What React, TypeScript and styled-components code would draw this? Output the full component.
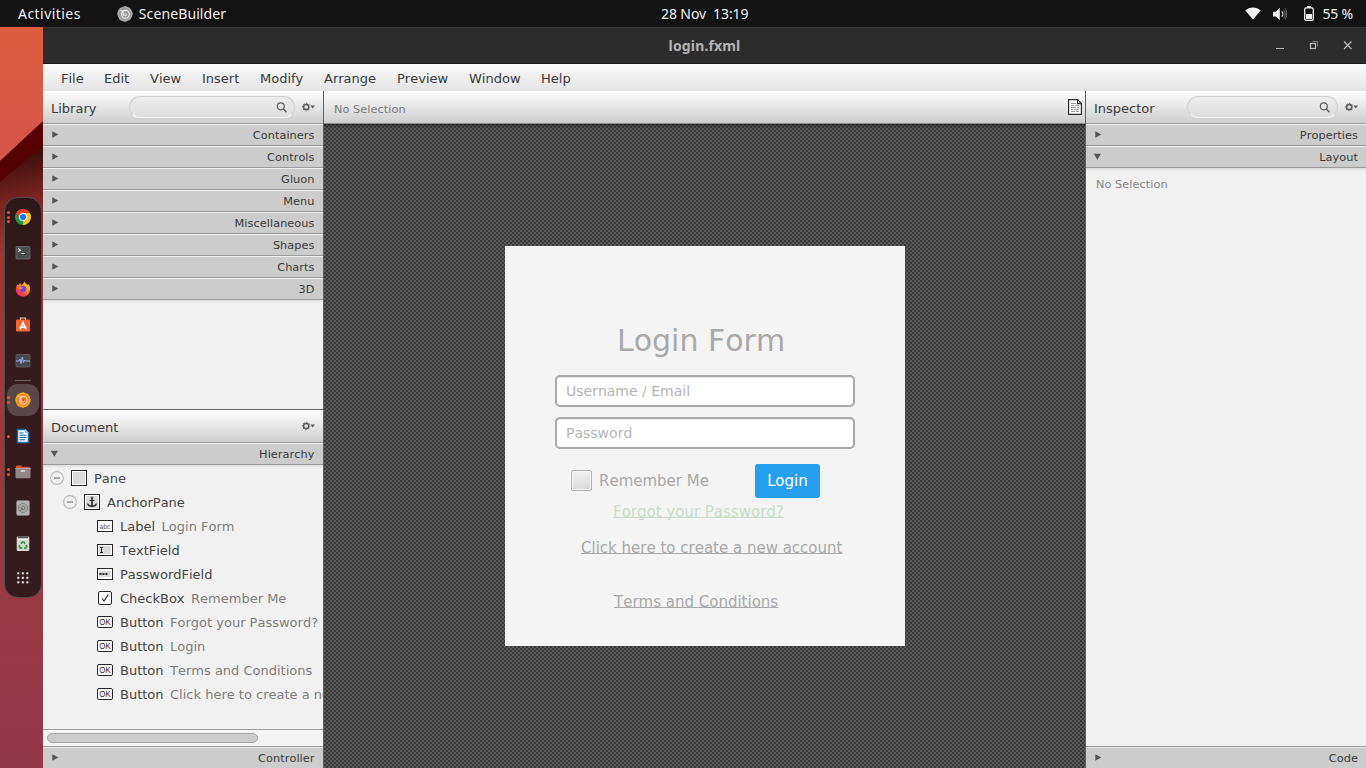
import React from 'react';
import styled, { createGlobalStyle } from 'styled-components';

const GlobalStyle = createGlobalStyle`
  * { box-sizing: border-box; }
  body {
    margin: 0;
    width: 1366px;
    height: 768px;
    overflow: hidden;
    font-family: 'DejaVu Sans', sans-serif;
    font-size: 13px;
    font-kerning: none;
    color: #3a3a3a;
  }
  svg { display: block; flex: none; }
`;

const Desktop = styled.div`
  display: flex;
  flex-direction: column;
  width: 1366px;
  height: 768px;
  overflow: hidden;
`;

const TopBar = styled.header`
  display: flex;
  align-items: center;
  height: 27px;
  flex: none;
  padding: 0 13px 0 18px;
  background: #131313;
  color: #f2f2f2;
  font: 14px/26px 'Noto Sans', sans-serif;
  white-space: pre;
`;

const TopGroup = styled.div<{ $end?: boolean }>`
  display: flex;
  align-items: center;
  height: 26px;
  flex: ${(p) => (p.$end ? '1' : '0 0 643px')};
  justify-content: ${(p) => (p.$end ? 'flex-end' : 'flex-start')};
`;

const BarText = styled.span<{ $ls?: number; $ml?: number }>`
  letter-spacing: ${(p) => p.$ls ?? 0}px;
  margin-left: ${(p) => p.$ml ?? 0}px;
`;

const IconSlot = styled.span<{ $ml: number }>`
  margin-left: ${(p) => p.$ml}px;
`;

const Body = styled.div`
  display: flex;
  flex: 1;
  min-height: 0;
`;

const DockArea = styled.aside`
  position: relative;
  width: 43px;
  flex: none;
  padding: 170px 1px 0 4px;
`;

const Wallpaper = styled.svg`
  position: absolute;
  inset: 0;
`;

const Dock = styled.nav`
  position: relative;
  display: flex;
  flex-direction: column;
  width: 38px;
  height: 401px;
  padding-top: 1px;
  border: 1px solid #56484a;
  border-radius: 14px;
  background: linear-gradient(#2d1819, #371b1e 30%, #351a1e);
`;

const DockItem = styled.div<{ $active?: boolean; $h?: number }>`
  position: relative;
  display: flex;
  align-items: center;
  justify-content: center;
  width: 32px;
  margin: ${(p) => (p.$active ? '2px' : '0')} 2px;
  height: ${(p) => (p.$active ? 32 : p.$h ?? 36)}px;
  border-radius: 11px;
  background: ${(p) => (p.$active ? '#5b4649' : 'transparent')};
`;

const Dots = styled.span`
  position: absolute;
  left: 0;
  top: 0;
  bottom: 0;
  display: flex;
  flex-direction: column;
  justify-content: center;
  gap: 1.500px;
  i {
    width: 3px;
    height: 3px;
    border-radius: 50%;
    background: #e8562a;
  }
`;

const DockSeparator = styled.div`
  width: 16px;
  height: 1px;
  margin: 1px 10px;
  flex: none;
  background: #6f5f60;
`;

const Window = styled.main`
  display: flex;
  flex-direction: column;
  flex: 1;
  min-width: 0;
`;

const TitleBar = styled.div`
  display: grid;
  grid-template-columns: 1fr auto 1fr;
  align-items: center;
  height: 37px;
  flex: none;
  background: #2c2c2c;
  border-top: 1px solid #3a3a3a;
  border-bottom: 1px solid #191919;
  color: #b4b4b4;
  font: bold 14px/34px 'Noto Sans', sans-serif;
`;

const TitleText = styled.span`
  letter-spacing: 0.15px;
`;

const WindowButtons = styled.div`
  display: flex;
  justify-content: flex-end;
  padding-right: 13px;
`;

const MenuBar = styled.div`
  display: flex;
  align-items: center;
  gap: 21px;
  height: 27px;
  flex: none;
  padding: 2px 18px 0;
  background: linear-gradient(#f9f9f9, #e4e4e4);
`;

const MenuItem = styled.span<{ $w: number }>`
  width: ${(p) => p.$w}px;
  white-space: nowrap;
`;

const Workspace = styled.div`
  display: flex;
  flex: 1;
  min-height: 0;
`;

const SidePanel = styled.section`
  display: flex;
  flex-direction: column;
  width: 280px;
  flex: none;
  background: #f1f1f1;
  overflow: hidden;
`;

const Divider = styled.div`
  width: 1px;
  flex: none;
  background: #606060;
`;

const ToolHeader = styled.div<{ $doc?: boolean }>`
  display: flex;
  align-items: center;
  height: ${(p) => (p.$doc ? 34 : 33)}px;
  flex: none;
  padding: 0 8px;
  border-top: ${(p) => (p.$doc ? '1px solid #666' : 'none')};
  border-bottom: 1px solid #9b9b9b;
  background: linear-gradient(#fefefe, #cecece);
`;

const PanelTitle = styled.span`
  flex: 1;
  padding-top: 2px;
`;

const SearchBox = styled.div<{ $w: number }>`
  display: flex;
  align-items: center;
  justify-content: flex-end;
  width: ${(p) => p.$w}px;
  height: 22px;
  margin-right: 7px;
  padding-right: 7px;
  border: 1px solid #d0d0d0;
  border-bottom-color: #f4f4f4;
  border-radius: 11px;
  background: linear-gradient(#ededed, #dddddd);
`;

const SectionBar = styled.div<{ $inset?: number }>`
  display: flex;
  align-items: center;
  justify-content: space-between;
  height: 22px;
  flex: none;
  padding: 0 ${(p) => p.$inset ?? 8}px 0 9px;
  border-top: 1px solid #f0f0f0;
  border-bottom: 1px solid #9a9a9a;
  background: #cccccc;
  font-size: 11.3px;
  line-height: 19px;
`;

const SectionTitle = styled.span`
  padding-top: 1px;
  letter-spacing: 0.06px;
`;

const SectionEnd = styled.div`
  height: 3px;
  flex: none;
  background: linear-gradient(#dcdcdc, #f1f1f1);
`;

const Fill = styled.div`
  flex: 1;
  min-height: 0;
`;

const Tree = styled.div`
  flex: none;
  height: 263px;
  overflow: hidden;
  margin-top: -2px;
  color: #444;
`;

const TreeRow = styled.div<{ $indent: number }>`
  display: flex;
  align-items: center;
  height: 24px;
  padding-left: ${(p) => p.$indent}px;
  white-space: pre;
`;

const RowIcon = styled.span<{ $gap: number }>`
  display: flex;
  justify-content: center;
  width: 16px;
  flex: none;
  margin-right: ${(p) => p.$gap}px;
`;

const Toggle = styled.span`
  flex: none;
  margin-right: 7px;
`;

const Detail = styled.span`
  margin-left: 6.5px;
  color: #7d7d7d;
`;

const ScrollBar = styled.div`
  height: 17px;
  flex: none;
  padding: 3px 4px;
  border-top: 1px solid #9e9e9e;
  background: #f3f3f3;
`;

const ScrollThumb = styled.div`
  width: 211px;
  height: 10px;
  border: 1px solid #a4a4a4;
  border-radius: 5px;
  background: #cccccc;
`;

const BottomSection = styled(SectionBar)`
  height: 22px;
  border-top: 1px solid #9a9a9a;
  border-bottom: none;
  box-shadow: inset 0 1px #ececec;
`;

const Center = styled.section`
  display: flex;
  flex-direction: column;
  flex: 1;
  min-width: 0;
`;

const StatusHeader = styled(ToolHeader)`
  justify-content: space-between;
  padding: 0 3px 0 10px;
  border-bottom-color: #8a8a8a;
  font-size: 11.3px;
  color: #7b7b7b;
`;

const StatusText = styled.span`
  padding-top: 4px;
  letter-spacing: 0.05px;
`;

const Stage = styled.div`
  flex: 1;
  padding: 122px 0 0 181px;
  background-color: #383838;
  background-image:
    linear-gradient(rgba(0, 0, 0, 0.4), transparent 4px),
    conic-gradient(#5a5a5a 25%, #3a3a3a 0 50%, #5a5a5a 0 75%, #3a3a3a 0);
  background-size: 100% 100%, 4px 4px;
`;

const Form = styled.div`
  display: flex;
  flex-direction: column;
  width: 400px;
  height: 400px;
  padding: 77px 50px 0;
  background: #f4f4f4;
  color: #a9a9a9;
  font-size: 15px;
`;

const FormTitle = styled.h1`
  margin: 0 0 16px 62px;
  font-size: 30px;
  line-height: 36px;
  font-weight: normal;
  white-space: nowrap;
`;

const Field = styled.div`
  height: 32px;
  flex: none;
  margin-bottom: 10px;
  padding-left: 9px;
  border: 2px solid #a9a9a9;
  border-radius: 5px;
  background: #fff;
  box-shadow: inset 0 1px 1px #e8e8e8;
  color: #b4b4b4;
  font-size: 14px;
  line-height: 29px;
`;

const OptionRow = styled.div`
  display: flex;
  align-items: center;
  height: 34px;
  margin: 5px 0 0 16px;
`;

const CheckBox = styled.span`
  width: 21px;
  height: 21px;
  margin: -1px 7px 0 0;
  border: 1px solid #b3b3b3;
  border-radius: 2px;
  background: linear-gradient(#efefef, #dadada);
  box-shadow: inset 0 0 0 1px #f4f4f4;
`;

const OptionLabel = styled.span`
  width: 156px;
`;

const LoginButton = styled.button`
  width: 65px;
  height: 34px;
  padding: 0;
  border: 0;
  border-radius: 3px;
  background: #26a0ee;
  color: #fff;
  font: 15px 'DejaVu Sans', sans-serif;
`;

const FormLink = styled.a<{ $left: number; $top: number; $green?: boolean }>`
  margin: ${(p) => p.$top}px 0 0 ${(p) => p.$left}px;
  color: ${(p) => (p.$green ? '#cbdccb' : '#a9a9a9')};
  line-height: 18px;
  white-space: nowrap;
  text-decoration: underline;
  text-decoration-thickness: 1px;
  text-underline-offset: 0px;
  text-decoration-skip-ink: none;
`;

const EmptyNote = styled.div`
  padding: 6px 10px;
  font-size: 11.3px;
  letter-spacing: 0.05px;
  line-height: 16px;
  color: #858585;
`;

const SearchIcon = () => (
  <svg width="11" height="11" viewBox="0 0 11 11" fill="none" stroke="#5c5c5c">
    <circle cx="4.800" cy="4.300" r="3.500" strokeWidth="1.150" />
    <path d="M7.400 6.900 10.500 10.200" strokeWidth="1.400" />
  </svg>
);

const GearIcon = () => (
  <svg width="13" height="10" viewBox="0 0 13 10">
    <circle cx="4.2" cy="5" r="2.6" fill="none" stroke="#5a5a5a" strokeWidth="1.5" />
    <circle cx="4.2" cy="5" r="3.7" fill="none" stroke="#5a5a5a" strokeWidth="1" strokeDasharray="1.4 1.506" strokeDashoffset=".7" />
    <path d="M8.4 3.6h4.6L10.7 6.4z" fill="#5a5a5a" />
  </svg>
);

const Arrow = ({ open }: { open?: boolean }) => (
  <svg width="7" height="8" viewBox="0 0 7 8" style={{ overflow: 'visible' }}>
    <path d={open ? 'M-1.2 0.8h7.200L2.400 6.800z' : 'M0.3 0.2v6.600L6.300 3.500z'} fill="#555" />
  </svg>
);

const SceneLogo = ({ mono, size }: { mono?: boolean; size: number }) => (
  <svg width={size} height={size} viewBox="0 0 16 16">
    <path
      d="M8 .1 10.4.9 13 1.9 14.7 4.6 15.9 8 14.9 11.1 12.9 14 10.4 15.1 8 15.9 5.4 15.1 2.9 14 1.2 11.1.1 8 1.1 4.7 2.9 2 5.5.9z"
      fill={mono ? '#a9a9a9' : '#f7a813'}
    />
    <circle cx="8" cy="8" r="5.800" fill={mono ? '#979797' : '#f07a1c'} />
    <g fill="none" stroke={mono ? '#f2f2f2' : '#ffe6d2'} strokeWidth="1.1">
      <circle cx="8.500" cy="8.300" r="3.900" />
      <path d="M3.300 4.500 6.300 5.300M6 6.300 6.500 9l2 .9 1.500-1.500" />
    </g>
    <circle cx="8.300" cy="8" r="1.500" fill={mono ? '#b9b9b9' : '#e4502a'} />
  </svg>
);

const WifiIcon = () => (
  <svg width="16" height="13" viewBox="0 0 16 13">
    <path d="M.3 3.6C4.4-.5 11.6-.5 15.7 3.6L8 12.6z" fill="#f2f2f2" />
  </svg>
);

const VolumeIcon = () => (
  <svg width="16" height="14" viewBox="0 0 16 14">
    <path d="M0 4.700h2.800L6.800.8v12.400L2.800 9.400H0z" fill="#f2f2f2" />
    <path d="M8.800 4.400c1.400 1.400 1.400 3.800 0 5.200" fill="none" stroke="#eee" strokeWidth="1.2" />
    <path d="M10.300 2.600c2.400 2.500 2.400 6.300 0 8.800M12 1.200c2.200 3.400 2.200 8 0 11.400" fill="none" stroke="#777" />
  </svg>
);

const BatteryIcon = () => (
  <svg width="10" height="15" viewBox="0 0 10 15">
    <path d="M3 0h4v2H3z" fill="#f2f2f2" />
    <rect x=".7" y="1.9" width="8.6" height="12.4" rx="1.4" fill="none" stroke="#f2f2f2" strokeWidth="1.3" />
    <path d="M2 8h6v5H2z" fill="#f2f2f2" />
  </svg>
);

const WindowControls = () => (
  <svg width="80" height="12" viewBox="0 0 80 12" fill="none" stroke="#bdbdbd">
    <path d="M3 8.500h8" />
    <rect x="37.5" y="3.5" width="5" height="5" strokeWidth="1.2" />
    <path d="M39.5 1.5h5v5" stroke="#808080" />
    <path d="M71 1.500l7.500 7.500M78.500 1.500 71 9" strokeWidth="1.2" />
  </svg>
);

const PageIcon = () => (
  <svg width="14" height="16" viewBox="0 0 14 16">
    <path d="M.6.6h9L13.400 4.400V15.400H.6z" fill="#fff" stroke="#2b2b2b" strokeWidth="1.200" />
    <path d="M9.500.6v4h4" fill="none" stroke="#2b2b2b" strokeWidth="1.100" />
    <path d="M3 4.500h5M3 6.500h3M7 6.500h4M3 8.500h5M9 8.500h2M3 10.500h2M6 10.500h5M3 12.500h4M8 12.500h3" stroke="#9a9a9a" />
  </svg>
);

const CollapseIcon = () => (
  <svg width="14" height="14" viewBox="0 0 14 14" fill="none">
    <circle cx="7" cy="7" r="6.400" stroke="#b9b9b9" strokeWidth="1.100" />
    <path d="M4 7h6" stroke="#a8a8a8" strokeWidth="2" />
  </svg>
);

type Kind = 'pane' | 'anchor' | 'label' | 'text' | 'password' | 'check' | 'button';

const NodeIcon = ({ kind }: { kind: Kind }) => {
  if (kind === 'pane' || kind === 'anchor') {
    return (
      <svg width="16" height="16" viewBox="0 0 16 16">
        <rect x=".5" y=".5" width="15" height="15" fill="#fff" stroke="#262626" />
        <rect x="2" y="2" width="12" height="12" fill="#dadada" />
        {kind === 'anchor' && (
          <g fill="none" stroke="#262626">
            <path d="M8 4v8.500" strokeWidth="1.600" />
            <path d="M5.500 6.500h5" strokeWidth="1" />
            <path d="M3.500 9.500c.6 1.900 2.100 2.900 4.500 2.900s3.900-1 4.500-2.900" strokeWidth="1.200" />
            <circle cx="8" cy="3.700" r=".8" />
          </g>
        )}
      </svg>
    );
  }
  if (kind === 'check') {
    return (
      <svg width="14" height="14" viewBox="0 0 14 14">
        <rect x=".5" y=".5" width="13" height="13" rx="1.500" fill="#fff" stroke="#262626" />
        <path d="M4 7.500 6 10 10.300 3.500" fill="none" stroke="#262626" strokeWidth="1.100" />
      </svg>
    );
  }
  return (
    <svg width="16" height="12" viewBox="0 0 16 12">
      <rect x=".5" y=".5" width="15" height="11" rx={kind === 'button' ? 1.5 : 0} fill="#fff" stroke="#262626" />
      {(kind === 'text' || kind === 'password') && (
        <rect x="2" y={kind === 'text' ? 2 : 3} width="12" height={kind === 'text' ? 8 : 6} fill="#dadada" />
      )}
      {kind === 'text' && <path d="M3 3.500h3M3 8.500h3M4.500 3.500v5" stroke="#222" />}
      {kind === 'password' && <path d="M2.500 6h2M5.500 6h2M8.500 6h2" stroke="#222" strokeWidth="2" />}
      {kind === 'label' && (
        <text x="8" y="8.500" textAnchor="middle" fontSize="6.500" fontFamily="DejaVu Sans" textLength="11" fill="#555">abc</text>
      )}
      {kind === 'button' && (
        <text x="8" y="9" textAnchor="middle" fontSize="8.500" fontFamily="Liberation Sans" textLength="11.500" lengthAdjust="spacingAndGlyphs" fill="#222">OK</text>
      )}
    </svg>
  );
};

const ChromeIcon = () => (
  <svg width="16" height="16" viewBox="0 0 16 16">
    <path d="M8 8 1.070 4A8 8 0 0 1 14.930 4z" fill="#e33b2e" />
    <path d="M8 8V4h6.930A8 8 0 0 1 8 16z" fill="#fcc31e" />
    <path d="M8 8v8A8 8 0 0 1 1.070 4z" fill="#229342" />
    <path d="M4.540 10 1.070 4 8 4zM11.460 10 8 16 8 10z" fill="#229342" />
    <path d="M1.070 4 4.600 10 8 4zM8 4h6.930" fill="#e33b2e" />
    <path d="M11.460 10 8 16 8.500 9z" fill="#fcc31e" />
    <circle cx="8" cy="8" r="4" fill="#fff" />
    <circle cx="8" cy="8" r="3.100" fill="#1a73e8" />
  </svg>
);

const TerminalIcon = () => (
  <svg width="16" height="14" viewBox="0 0 16 14">
    <rect x="1" y=".5" width="14" height="12.500" rx="1" fill="#4a4d4e" stroke="#77797a" strokeWidth=".7" />
    <path d="M3 2.500l2.500 1.700L3 5.900M6.500 7.500H10" fill="none" stroke="#fff" strokeWidth="1.100" />
  </svg>
);

const FirefoxIcon = () => (
  <svg width="16" height="16" viewBox="0 0 16 16">
    <defs>
      <linearGradient id="fox" x1="1" y1="0" x2="0.150" y2="1">
        <stop offset="0" stopColor="#fff44f" />
        <stop offset=".4" stopColor="#ff9a1f" />
        <stop offset=".7" stopColor="#ff4a3e" />
        <stop offset="1" stopColor="#e31587" />
      </linearGradient>
    </defs>
    <path d="M2.500 3 3.700 4.200 5 1.800 6.200 4C8 3.500 8.600 1.800 9.500.5c.6 1.800 2 2.200 3 4l.5-1.800c2.200 2.500 2.800 5.600 1.400 8.800A7.100 7.100 0 0 1 1.300 11C.4 8 .9 5 2.500 3z" fill="url(#fox)" />
    <circle cx="8" cy="8" r="3.300" fill="#7542e5" />
    <path d="M3.200 6.200c2-.7 3 .7 4.800.3-.3 1.200-2 1.100-2.200 2.200C4.500 8.600 3.600 7.600 3.200 6.200z" fill="#ff9424" />
  </svg>
);

const SoftwareIcon = () => (
  <svg width="16" height="16" viewBox="0 0 16 16">
    <path d="M5.500 3V1h5v2" fill="none" stroke="#f5d7c6" strokeWidth="1.100" />
    <rect x="1" y="2.500" width="14" height="12" rx="1.200" fill="#ee662b" />
    <path d="M5 12.500 8 5.500 11 12.500M4.500 10.300h7" fill="none" stroke="#fff" strokeWidth="1.500" />
  </svg>
);

const MonitorIcon = () => (
  <svg width="16" height="14" viewBox="0 0 16 14">
    <rect x="1" y=".5" width="14" height="12.500" rx="1" fill="#46494b" stroke="#656768" strokeWidth=".7" />
    <path d="M1 7H4l1-2 1 4.500L7.300 3 8.600 8.500 9.500 6l.8 1h4.700" fill="none" stroke="#9eb5ee" />
  </svg>
);

const WriterIcon = () => (
  <svg width="14" height="16" viewBox="0 0 14 16">
    <path d="M1.500 1.500h7.800l3.200 3.200v9.800H1.500z" fill="#fff" stroke="#0d6cb0" strokeWidth="1.500" />
    <path d="M9 .8 13.100 5H9z" fill="#7fc4f1" />
    <path d="M3.500 5h4M3.500 7.300h7M3.500 9.500h7M3.500 11.700h5.500" stroke="#0f5f99" strokeWidth="1.100" />
  </svg>
);

const FilesIcon = () => (
  <svg width="16" height="14" viewBox="0 0 16 14">
    <path d="M1 1.500Q1 .5 2 .5h4l1 1.200h7q1 0 1 1V6H1z" fill="#d9502d" />
    <path d="M.5 3h15V12q0 1.300-1.300 1.300H1.800Q.5 13.300.5 12z" fill="#8f8886" />
    <path d="M.5 3h15v1H.5z" fill="#aaa3a1" />
    <path d="M5.800 6h4.400" stroke="#fff" strokeWidth="1.200" />
  </svg>
);

const DiskIcon = () => (
  <svg width="14" height="16" viewBox="0 0 14 16">
    <rect x=".7" y=".7" width="12.600" height="14.600" rx="1.200" fill="#b5b5b3" stroke="#8e8e8c" strokeWidth=".8" />
    <circle cx="7" cy="8" r="4.700" fill="#a9a9a7" stroke="#7d7d7b" />
    <path d="M4.200 10.800 7 8" stroke="#666" />
    <circle cx="7" cy="8" r="2" fill="none" stroke="#777775" />
  </svg>
);

const TrashIcon = () => (
  <svg width="14" height="16" viewBox="0 0 14 16">
    <rect x=".7" y=".5" width="12.600" height="14.500" rx="1.200" fill="#d6d6d4" />
    <path d="M2 .5h10v2H2z" fill="#505050" />
    <path d="M2 2.500h10v1.200H2z" fill="#fff" />
    <g fill="none" stroke="#3c9739" strokeWidth="1.700">
      <path d="M5 7.700 6.100 6h1.800L9 7.700M10 8.800l.7 1.600-.9 1.800H8M6.300 12.200H4.200l-.9-1.800.7-1.200" />
    </g>
  </svg>
);

const AppsIcon = () => (
  <svg width="12" height="12" viewBox="0 0 12 12" fill="#f3f3f3">
    {[0, 4.5, 9].map((y) => [0, 4.5, 9].map((x) => <rect key={`${x}-${y}`} x={x + 0.3} y={y + 0.3} width="2" height="2" />))}
  </svg>
);

const dockItems: { icon: React.ReactNode; dots?: number; active?: boolean }[] = [
  { icon: <ChromeIcon />, dots: 3 },
  { icon: <TerminalIcon /> },
  { icon: <FirefoxIcon /> },
  { icon: <SoftwareIcon /> },
  { icon: <MonitorIcon /> },
  { icon: <SceneLogo size={16} />, dots: 2, active: true },
  { icon: <WriterIcon />, dots: 1 },
  { icon: <FilesIcon />, dots: 2 },
  { icon: <DiskIcon /> },
  { icon: <TrashIcon /> },
];

const menus: [string, number][] = [
  ['File', 22], ['Edit', 25], ['View', 31], ['Insert', 37], ['Modify', 43],
  ['Arrange', 52], ['Preview', 51], ['Window', 51], ['Help', 30],
];

const librarySections = ['Containers', 'Controls', 'Gluon', 'Menu', 'Miscellaneous', 'Shapes', 'Charts', '3D'];

const treeNodes: { kind: Kind; name: string; detail?: string }[] = [
  { kind: 'label', name: 'Label', detail: 'Login Form' },
  { kind: 'text', name: 'TextField' },
  { kind: 'password', name: 'PasswordField' },
  { kind: 'check', name: 'CheckBox', detail: 'Remember Me' },
  { kind: 'button', name: 'Button', detail: 'Forgot your Password?' },
  { kind: 'button', name: 'Button', detail: 'Login' },
  { kind: 'button', name: 'Button', detail: 'Terms and Conditions' },
  { kind: 'button', name: 'Button', detail: 'Click here to create a new account' },
];

const Section = ({ title, open, inset }: { title: string; open?: boolean; inset?: number }) => (
  <SectionBar $inset={inset}>
    <Arrow open={open} />
    <SectionTitle>{title}</SectionTitle>
  </SectionBar>
);

const DockColumn = () => (
  <DockArea>
    <Wallpaper width="43" height="741" viewBox="0 0 43 741">
      <defs>
        <linearGradient id="sky" x1="0" y1="0" x2="0" y2="1">
          <stop offset="0" stopColor="#dd5d40" />
          <stop offset="1" stopColor="#d4554a" />
        </linearGradient>
        <linearGradient id="low" gradientUnits="userSpaceOnUse" x1="0" y1="135" x2="22" y2="230">
          <stop offset="0" stopColor="#400f0c" />
          <stop offset=".45" stopColor="#7c2621" />
          <stop offset="1" stopColor="#a23834" />
        </linearGradient>
        <linearGradient id="tint" x1="0" y1="0" x2="0" y2="1">
          <stop offset=".3" stopColor="#973c4c" stopOpacity="0" />
          <stop offset="1" stopColor="#93384a" />
        </linearGradient>
      </defs>
      <rect width="43" height="741" fill="url(#low)" />
      <rect width="43" height="741" fill="url(#tint)" />
      <path d="M0 125 43 90V119L0 155z" fill="#560101" />
      <path d="M0 0H43V94L0 134z" fill="url(#sky)" />
    </Wallpaper>
    <Dock>
      {dockItems.map((item, i) => (
        <React.Fragment key={i}>
          {item.active && <DockSeparator />}
          <DockItem $active={item.active}>
            {item.dots && <Dots>{Array.from({ length: item.dots }, (_, d) => <i key={d} />)}</Dots>}
            {item.icon}
          </DockItem>
        </React.Fragment>
      ))}
      <DockItem $h={32}><AppsIcon /></DockItem>
    </Dock>
  </DockArea>
);

const LeftPanel = () => (
  <SidePanel>
    <ToolHeader>
      <PanelTitle>Library</PanelTitle>
      <SearchBox $w={166}><SearchIcon /></SearchBox>
      <GearIcon />
    </ToolHeader>
    {librarySections.map((title) => <Section key={title} title={title} inset={8.5} />)}
    <SectionEnd />
    <Fill />
    <ToolHeader $doc>
      <PanelTitle>Document</PanelTitle>
      <GearIcon />
    </ToolHeader>
    <Section title="Hierarchy" open inset={8.5} />
    <SectionEnd />
    <Tree>
      <TreeRow $indent={7}>
        <Toggle><CollapseIcon /></Toggle>
        <RowIcon $gap={7}><NodeIcon kind="pane" /></RowIcon>
        Pane
      </TreeRow>
      <TreeRow $indent={20}>
        <Toggle><CollapseIcon /></Toggle>
        <RowIcon $gap={7}><NodeIcon kind="anchor" /></RowIcon>
        AnchorPane
      </TreeRow>
      {treeNodes.map((node, i) => (
        <TreeRow key={i} $indent={54}>
          <RowIcon $gap={7}><NodeIcon kind={node.kind} /></RowIcon>
          {node.name}
          {node.detail && <Detail>{node.detail}</Detail>}
        </TreeRow>
      ))}
    </Tree>
    <ScrollBar><ScrollThumb /></ScrollBar>
    <BottomSection $inset={8.5}><Arrow /><SectionTitle>Controller</SectionTitle></BottomSection>
  </SidePanel>
);

const Editor = () => (
  <Center>
    <StatusHeader>
      <StatusText>No Selection</StatusText>
      <PageIcon />
    </StatusHeader>
    <Stage>
      <Form>
        <FormTitle>Login Form</FormTitle>
        <Field>Username / Email</Field>
        <Field>Password</Field>
        <OptionRow>
          <CheckBox />
          <OptionLabel>Remember Me</OptionLabel>
          <LoginButton>Login</LoginButton>
        </OptionRow>
        <FormLink $left={58} $top={5} $green>Forgot your Password?</FormLink>
        <FormLink $left={26} $top={18}>Click here to create a new account</FormLink>
        <FormLink $left={59} $top={36}>Terms and Conditions</FormLink>
      </Form>
    </Stage>
  </Center>
);

const RightPanel = () => (
  <SidePanel>
    <ToolHeader>
      <PanelTitle>Inspector</PanelTitle>
      <SearchBox $w={151}><SearchIcon /></SearchBox>
      <GearIcon />
    </ToolHeader>
    <Section title="Properties" />
    <Section title="Layout" open />
    <SectionEnd />
    <EmptyNote>No Selection</EmptyNote>
    <Fill />
    <BottomSection><Arrow /><SectionTitle>Code</SectionTitle></BottomSection>
  </SidePanel>
);

export default function App() {
  return (
    <Desktop>
      <GlobalStyle />
      <TopBar>
        <TopGroup>
          <BarText $ls={0.45}>Activities</BarText>
          <IconSlot $ml={36}><SceneLogo mono size={16} /></IconSlot>
          <BarText $ls={0.1} $ml={6}>SceneBuilder</BarText>
        </TopGroup>
        <BarText $ls={-0.1}>28 Nov  13:19</BarText>
        <TopGroup $end>
          <WifiIcon />
          <IconSlot $ml={12}><VolumeIcon /></IconSlot>
          <IconSlot $ml={15}><BatteryIcon /></IconSlot>
          <BarText $ls={-0.2} $ml={9}>55 %</BarText>
        </TopGroup>
      </TopBar>
      <Body>
        <DockColumn />
        <Window>
          <TitleBar>
            <span />
            <TitleText>login.fxml</TitleText>
            <WindowButtons><WindowControls /></WindowButtons>
          </TitleBar>
          <MenuBar>
            {menus.map(([name, w]) => <MenuItem key={name} $w={w}>{name}</MenuItem>)}
          </MenuBar>
          <Workspace>
            <LeftPanel />
            <Divider />
            <Editor />
            <Divider />
            <RightPanel />
          </Workspace>
        </Window>
      </Body>
    </Desktop>
  );
}
